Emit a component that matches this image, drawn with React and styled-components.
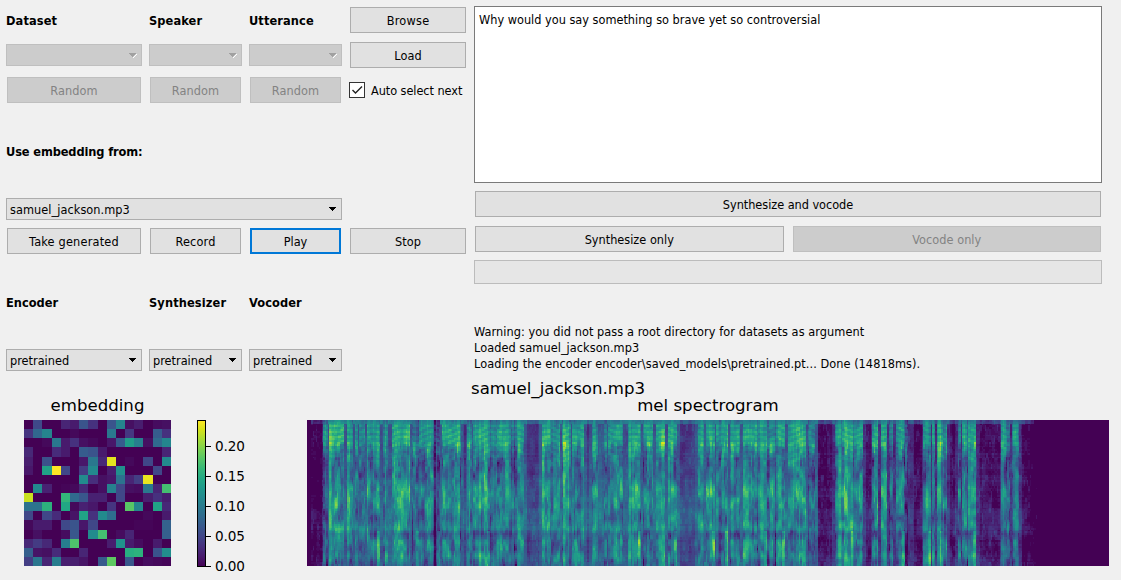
import React, { useMemo } from "react";
import styled, { createGlobalStyle, css } from "styled-components";

const GlobalStyle = createGlobalStyle`
  * { box-sizing: border-box; }
  body {
    margin: 0;
    background: #f0f0f0;
    color: #000;
    font-family: "DejaVu Sans Condensed", "DejaVu Sans", sans-serif;
    font-stretch: condensed;
    font-size: 12.6px;
    overflow: hidden;
  }
`;

const Window = styled.main`
  width: 1121px;
  height: 580px;
  display: flex;
  flex-direction: column;
  background: #f0f0f0;
`;

const Panels = styled.div`
  display: flex;
  gap: 7px;
  padding: 6px 19px 0 6px;
  height: 371px;
`;

const Browser = styled.section`
  display: grid;
  grid-template-columns: 136px 93px 93px 118px;
  grid-template-rows: 28px 28px 28px 80px 22px 28px 80px 22px;
  gap: 7px;
  align-items: center;
  flex: none;
`;

const Generation = styled.section`
  display: flex;
  flex-direction: column;
  gap: 7px;
  width: 628px;
`;

const Heading = styled.div`
  grid-column: ${(p) => p.$col || "auto"};
  padding-top: 2px;
  font-weight: bold;
  font-size: 12.7px;
  letter-spacing: ${(p) => p.$track || 0}px;
  line-height: 16px;
  white-space: nowrap;
`;

const Button = styled.button`
  flex: ${(p) => p.$flex || "none"};
  height: 26px;
  margin: 1px;
  padding: 2px 0 0;
  display: flex;
  align-items: center;
  justify-content: center;
  align-self: stretch;
  background: #e1e1e1;
  border: 1px solid #adadad;
  color: #000;
  font: inherit;
  line-height: 16px;
  letter-spacing: ${(p) => p.$track || 0}px;
  white-space: nowrap;
  ${(p) => p.$focused && css`border: 2px solid #0078d7;`}
  &:disabled {
    background: #ccc;
    border-color: #bfbfbf;
    color: #838383;
  }
`;

const Combo = styled.div`
  grid-column: ${(p) => p.$col || "auto"};
  height: 22px;
  padding: 0 4px 0 3px;
  display: flex;
  align-items: center;
  justify-content: space-between;
  background: ${(p) => (p.$disabled ? "#ccc" : "#e1e1e1")};
  border: 1px solid ${(p) => (p.$disabled ? "#bfbfbf" : "#adadad")};
  line-height: 16px;
`;

const ComboText = styled.span`
  padding-top: 2px;
  letter-spacing: ${(p) => p.$track || 0}px;
`;

const CheckLabel = styled.div`
  display: flex;
  align-items: center;
  gap: 6px;
  white-space: nowrap;
  line-height: 16px;
  letter-spacing: -0.06px;
`;

const CheckText = styled.span`
  padding-top: 2px;
`;

const CheckBox = styled.span`
  width: 16px;
  height: 16px;
  display: flex;
  border: 1px solid #333;
  background: #fff;
`;

const TextArea = styled.div`
  height: 177px;
  padding: 5px 4px;
  background: #fff;
  border: 1px solid #7a7a7a;
  line-height: 16px;
`;

const ButtonRow = styled.div`
  display: flex;
  gap: 7px;
  height: 28px;
`;

const Progress = styled.div`
  height: 24px;
  background: #e6e6e6;
  border: 1px solid #bcbcbc;
`;

const Log = styled.div`
  flex: 1;
  display: flex;
  flex-direction: column;
  justify-content: flex-end;
  margin-bottom: -1px;
  line-height: 16px;
  white-space: nowrap;
`;

const LogLine = styled.div`
  letter-spacing: ${(p) => p.$track || 0}px;
`;

const Figure = styled.section`
  font-family: "DejaVu Sans", sans-serif;
  font-stretch: normal;
  font-size: 16.6px;
  line-height: 18px;
  padding-top: 9px;
`;

const FigureTitle = styled.div`
  width: 1116px;
  text-align: center;
  height: 17px;
`;

const Plots = styled.div`
  display: flex;
  align-items: flex-start;
  padding-left: 24px;
`;

const Plot = styled.div`
  width: ${(p) => p.$width}px;
  margin-right: ${(p) => p.$after || 0}px;
`;

const PlotTitle = styled.div`
  height: 23px;
  text-align: center;
`;

const Drawing = styled.svg`
  display: block;
`;

const TickText = styled.text`
  font-family: "DejaVu Sans", sans-serif;
  font-size: 13.6px;
`;

const VIRIDIS = [
  [68, 1, 84], [72, 26, 108], [71, 47, 125], [65, 68, 135], [57, 86, 140],
  [49, 104, 142], [42, 120, 142], [35, 136, 142], [31, 152, 139], [34, 168, 132],
  [53, 183, 121], [84, 197, 104], [122, 209, 81], [165, 219, 54], [210, 226, 27], [253, 231, 37],
];

function viridis(value) {
  const t = Math.max(0, Math.min(1, value)) * 15;
  const i = Math.min(14, Math.floor(t));
  const f = t - i;
  const [r, g, b] = VIRIDIS[i].map((c, k) => Math.round(c + (VIRIDIS[i + 1][k] - c) * f));
  return `rgb(${r},${g},${b})`;
}

const EMBEDDING = [
  [0, 22, 0, 0, 10, 7, 26, 14, 0, 26, 45, 4, 8, 0, 3, 4],
  [15, 33, 45, 0, 0, 2, 0, 0, 0, 40, 0, 16, 0, 0, 29, 14],
  [0, 0, 2, 40, 7, 14, 4, 2, 0, 6, 29, 55, 43, 4, 34, 46],
  [11, 0, 0, 12, 7, 0, 29, 26, 7, 0, 0, 0, 0, 0, 0, 10],
  [8, 0, 25, 0, 0, 0, 6, 40, 11, 96, 0, 2, 0, 21, 0, 47],
  [6, 0, 57, 100, 21, 0, 17, 47, 0, 8, 50, 0, 0, 0, 21, 0],
  [0, 0, 0, 0, 0, 0, 48, 13, 4, 6, 38, 10, 18, 97, 0, 0],
  [0, 47, 9, 0, 1, 2, 11, 0, 4, 44, 21, 4, 3, 40, 10, 70],
  [92, 0, 0, 0, 66, 34, 27, 9, 9, 0, 21, 0, 0, 8, 14, 8],
  [38, 38, 64, 0, 60, 2, 9, 6, 0, 15, 0, 74, 46, 0, 58, 11],
  [21, 0, 21, 12, 0, 5, 58, 14, 48, 36, 0, 0, 0, 2, 0, 7],
  [2, 7, 7, 0, 22, 26, 6, 21, 0, 0, 0, 0, 1, 1, 0, 31],
  [0, 4, 0, 0, 3, 27, 0, 48, 70, 0, 3, 10, 0, 0, 0, 30],
  [11, 17, 11, 0, 43, 72, 0, 0, 0, 8, 51, 7, 3, 0, 7, 0],
  [30, 5, 4, 12, 0, 0, 10, 0, 0, 0, 0, 62, 64, 0, 26, 49],
  [18, 39, 10, 42, 8, 8, 5, 0, 28, 75, 0, 27, 0, 3, 2, 1],
];

function EmbeddingPlot() {
  return (
    <Drawing width="147" height="146" viewBox="0 0 16 16" preserveAspectRatio="none" shapeRendering="crispEdges">
      {EMBEDDING.map((row, y) =>
        row.map((v, x) => <rect key={`${x}-${y}`} x={x} y={y} width="1.02" height="1.02" fill={viridis(v / 100)} />)
      )}
    </Drawing>
  );
}

const TICKS = [["0.20", 26.5], ["0.15", 56.5], ["0.10", 86.5], ["0.05", 116.5], ["0.00", 146.5]];

function ColorBar() {
  return (
    <Drawing width="52" height="156" viewBox="0 0 52 156">
      <defs>
        <linearGradient id="scale" x1="0" y1="1" x2="0" y2="0">
          {VIRIDIS.map((_, i) => <stop key={i} offset={i / 15} stopColor={viridis(i / 15)} />)}
        </linearGradient>
      </defs>
      <rect x="0.5" y="0.5" width="8" height="146" fill="url(#scale)" stroke="#000" />
      {TICKS.map(([label, y]) => (
        <g key={label}>
          <path d={`M9 ${y}h5`} stroke="#000" />
          <TickText x="18" y={y + 4.5} textLength="30">{label}</TickText>
        </g>
      ))}
    </Drawing>
  );
}

/* Speech bursts: start, end and strength, in pixels from the left of the plot. */
const BURSTS = [
  [16, 20, 0.53], [21, 37, 0.65], [39, 45, 0.55], [47, 50, 0.55], [51, 58, 0.5], [59, 72, 0.53],
  [76, 80, 0.56], [84, 103, 0.59], [104, 111, 0.38], [112, 126, 0.54], [127, 133, 0.26], [134, 153, 0.57],
  [160, 164, 0.53], [166, 182, 0.62], [182, 189, 0.5], [190, 203, 0.57], [203, 207, 0.46], [208, 217, 0.54],
  [234, 243, 0.59], [244, 253, 0.53], [254, 263, 0.6], [264, 277, 0.53], [284, 290, 0.55],
  [296, 299, 0.52], [301, 315, 0.55], [320, 333, 0.58], [335, 346, 0.54], [348, 358, 0.6],
  [360, 370, 0.56], [390, 396, 0.55], [398, 407, 0.6], [408, 413, 0.5], [413, 421, 0.58],
  [422, 433, 0.54], [435, 450, 0.55], [451, 460, 0.57], [460, 468, 0.48], [469, 478, 0.56],
  [480, 499, 0.57], [500, 508, 0.48], [527, 534, 0.57], [535, 546, 0.61], [546, 556, 0.52],
  [565, 571, 0.52], [573, 580, 0.57], [581, 586, 0.42], [588, 597, 0.57], [597, 600, 0.3], [603, 604, 0.4],
  [616, 623, 0.54], [624, 627, 0.5], [629, 635, 0.62], [635, 640, 0.5], [650, 653, 0.48],
  [654, 660, 0.52], [660, 668, 0.59], [669, 670, 0.45], [694, 699, 0.57], [700, 703, 0.42], [704, 711, 0.49],
];

/* Mean energy of a burst along the mel axis, lowest band first. */
const PROFILE = [
  [0, 0.78], [0.03, 0.98], [0.12, 1.06], [0.16, 1.08], [0.2, 0.84], [0.3, 0.68], [0.4, 0.76],
  [0.47, 0.94], [0.55, 0.96], [0.62, 0.83], [0.68, 0.74], [0.74, 0.94], [0.785, 0.58],
  [0.84, 0.82], [0.9, 0.74], [0.94, 0.88], [0.97, 0.7], [1, 0.64],
];

function profile(t) {
  let i = 0;
  while (i < PROFILE.length - 2 && t > PROFILE[i + 1][0]) i += 1;
  const [a, va] = PROFILE[i];
  const [b, vb] = PROFILE[i + 1];
  return va + ((vb - va) * (t - a)) / (b - a);
}

function hash(x, y) {
  let h = (Math.imul(x | 0, 374761393) + Math.imul(y | 0, 668265263)) | 0;
  h = Math.imul(h ^ (h >>> 13), 1274126177);
  return ((h ^ (h >>> 16)) >>> 0) / 4294967295;
}

function noise(x, y) {
  const ix = Math.floor(x), iy = Math.floor(y);
  const ease = (v) => v * v * (3 - 2 * v);
  const u = ease(x - ix), v = ease(y - iy);
  const top = hash(ix, iy) * (1 - u) + hash(ix + 1, iy) * u;
  const low = hash(ix, iy + 1) * (1 - u) + hash(ix + 1, iy + 1) * u;
  return top * (1 - v) + low * v - 0.5;
}

const COLS = 535;
const BANDS = 80;
const LEVELS = 40;

function energy(col, band) {
  const x = (col * 802) / COLS;
  const t = band / (BANDS - 1);
  const fadeOut = x > 712 ? (x - 712) * 0.006 : 0;
  const edge = 726 + (hash(1, band) - 0.5) * 6;
  if (x > edge || x < 4) return 0;
  const grain = hash(col, band + 900) - 0.5;
  const index = BURSTS.findIndex(([a, b]) => x >= a && x <= b);
  if (index < 0) {
    const quiet = x < 16 ? -0.02 : x > 510 ? 0.03 : 0.16;
    const streak = (t > 0.6 && t < 0.8 ? 0.05 : 0) + (t > 0.93 ? 0.04 : 0) + (hash(3, band) - 0.5) * 0.04;
    const near = BURSTS.some(([a, b]) => x >= a - 2.5 && x <= b + 3) ? 0.1 : 0;
    const speckle = hash(col, Math.floor(band / 3) + 31) > 0.85 ? 0.06 : 0;
    const hum = x < 510 && x > 16 && t > 0.4 && t < 0.76 ? 0.06 : 0;
    return quiet + near + streak + hum + speckle + noise(x * 0.28, band * 0.15) * 0.13 + grain * 0.04
      + (t < 0.025 ? 0.14 : 0) - fadeOut;
  }
  const [a, b, strength] = BURSTS[index];
  const tone = profile(t);
  const column = noise(x * 0.62, 77) * 0.2;
  const slant = x + Math.sin(index * 2.1) * band * 0.16;
  const formants = noise(slant * 0.2 + index * 3, band * 0.13) * 0.36;
  const patch = noise(x * 0.6, band * 0.3 + 40) * 0.26;
  const bend = Math.sin(x * 0.14 + index) * 2;
  const voiced = t > 0.03 && t < 0.3 ? Math.sin((band + bend) * 1.9) * 0.07 * (1 - t * 2) : 0;
  const steady = t < 0.14 ? 0.45 : 1;
  const hiss = hash(index, 6) > 0.72 && t > 0.76 && x > b - 3 ? 0.22 : 0;
  const rim = x - a < 0.9 || b - x < 0.9 ? -0.1 : 0;
  return strength * tone - 0.005 + (column + formants + patch) * steady + voiced + hiss + rim + grain * 0.05;
}

function Spectrogram() {
  const levels = useMemo(() => {
    const paths = Array.from({ length: LEVELS + 1 }, () => []);
    for (let band = 0; band < BANDS; band += 1) {
      let start = 0;
      let current = -1;
      for (let col = 0; col <= COLS; col += 1) {
        const level = col === COLS ? -2 : Math.round(Math.max(0, Math.min(1, energy(col, band))) * LEVELS);
        if (level !== current) {
          if (current > 0) paths[current].push(`M${start} ${band}h${col - start}v1h${start - col}z`);
          start = col;
          current = level;
        }
      }
    }
    return paths;
  }, []);
  return (
    <Drawing width="802" height="146" viewBox={`0 0 ${COLS} ${BANDS}`} preserveAspectRatio="none" shapeRendering="crispEdges">
      <rect width={COLS} height={BANDS} fill={viridis(0)} />
      {levels.map((d, i) => d.length > 0 && <path key={i} d={d.join("")} fill={viridis(i / LEVELS)} />)}
    </Drawing>
  );
}

function Select({ children, disabled, col, track }) {
  return (
    <Combo $disabled={disabled} $col={col}>
      <ComboText $track={track}>{children}</ComboText>
      <svg width="9" height="6" viewBox="0 0 9 6" shapeRendering="crispEdges">
        {disabled && <path d="M5 6v-1h1v-1h1v-1h1v-1h1v1h-1v1h-1v1h-1v1z" fill="#fff" />}
        <path d="M1 1h7v1h-1v1h-1v1h-1v1h-1v-1h-1v-1h-1v-1h-1z" fill={disabled ? "#a0a0a0" : "#000"} />
      </svg>
    </Combo>
  );
}

export default function App() {
  return (
    <Window>
      <GlobalStyle />
      <Panels>
        <Browser>
          <Heading $track={0.1}>Dataset</Heading>
          <Heading $track={0.1}>Speaker</Heading>
          <Heading $track={0.1}>Utterance</Heading>
          <Button $track={0.25}>Browse</Button>

          <Select disabled />
          <Select disabled />
          <Select disabled />
          <Button $track={0.1}>Load</Button>

          <Button disabled $track={0.1}>Random</Button>
          <Button disabled $track={0.1}>Random</Button>
          <Button disabled $track={0.1}>Random</Button>
          <CheckLabel>
            <CheckBox>
              <svg width="14" height="14" viewBox="0 0 14 14">
                <path d="M2.5 7l3 3L12 3.5" fill="none" stroke="#222" strokeWidth="1.4" />
              </svg>
            </CheckBox>
            <CheckText>Auto select next</CheckText>
          </CheckLabel>

          <Heading $col="1 / -1" $track={-0.12}>Use embedding from:</Heading>

          <Select col="1 / 4" track={0.06}>samuel_jackson.mp3</Select>
          <span />

          <Button $track={0.2}>Take generated</Button>
          <Button $track={0.15}>Record</Button>
          <Button $focused>Play</Button>
          <Button $track={0.1}>Stop</Button>

          <Heading $track={0.02}>Encoder</Heading>
          <Heading $track={0.12}>Synthesizer</Heading>
          <Heading $track={0.1}>Vocoder</Heading>
          <span />

          <Select>pretrained</Select>
          <Select>pretrained</Select>
          <Select>pretrained</Select>
        </Browser>

        <Generation>
          <TextArea>Why would you say something so brave yet so controversial</TextArea>
          <Button $track={-0.04}>Synthesize and vocode</Button>
          <ButtonRow>
            <Button $flex="1 1 0">Synthesize only</Button>
            <Button $flex="1 1 0" disabled $track={0.05}>Vocode only</Button>
          </ButtonRow>
          <Progress />
          <Log>
            <LogLine $track={0.07}>Warning: you did not pass a root directory for datasets as argument</LogLine>
            <LogLine $track={0.06}>Loaded samuel_jackson.mp3</LogLine>
            <LogLine $track={0.055}>Loading the encoder encoder\saved_models\pretrained.pt... Done (14818ms).</LogLine>
          </Log>
        </Generation>
      </Panels>

      <Figure>
        <FigureTitle>samuel_jackson.mp3</FigureTitle>
        <Plots>
          <Plot $width={147} $after={26}>
            <PlotTitle>embedding</PlotTitle>
            <EmbeddingPlot />
          </Plot>
          <Plot $width={52} $after={58}>
            <PlotTitle />
            <ColorBar />
          </Plot>
          <Plot $width={802}>
            <PlotTitle>mel spectrogram</PlotTitle>
            <Spectrogram />
          </Plot>
        </Plots>
      </Figure>
    </Window>
  );
}
